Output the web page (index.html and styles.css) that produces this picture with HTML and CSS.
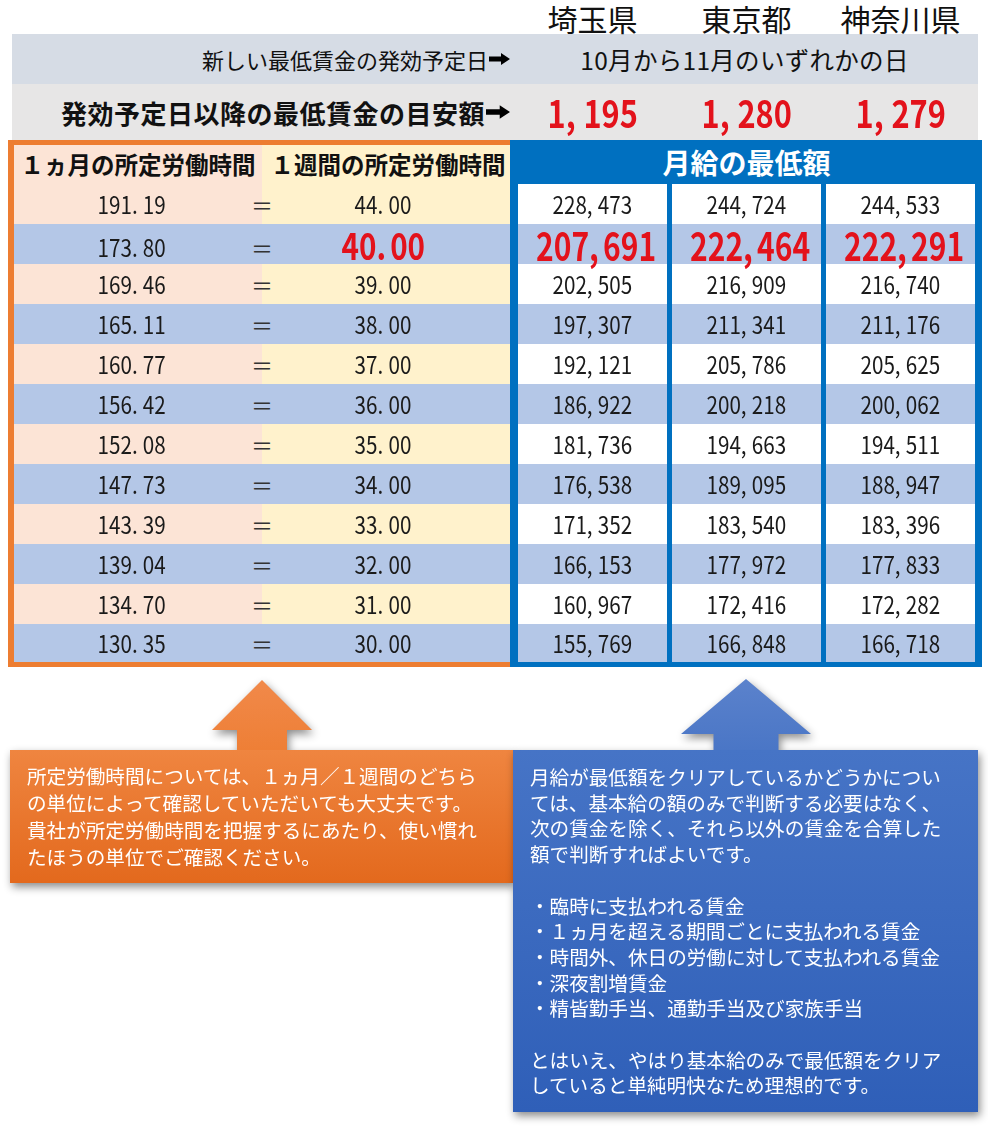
FILE: index.html
```html
<!DOCTYPE html>
<html lang="ja">
<head>
<meta charset="utf-8">
<title>最低賃金の目安額</title>
<link rel="stylesheet" href="styles.css">
</head>
<body>
<div class="page">
  <div class="cities">
    <div>埼玉県</div><div>東京都</div><div>神奈川県</div>
  </div>

  <div class="band band1">
    <div class="label">新しい最低賃金の発効予定日<svg class="arw arw-s" viewBox="0 0 21 12"><path d="M0 3.5h12V0l9 6-9 6V8.5H0z"/></svg></div>
    <div class="date">10月から11月のいずれかの日</div>
  </div>

  <div class="band band2">
    <div class="label strong">発効予定日以降の最低賃金の目安額<svg class="arw arw-l" viewBox="0 0 21 12"><path d="M0 3.5h12V0l9 6-9 6V8.5H0z"/></svg></div>
    <div class="rate"><span class="num">1<span class="sep">,</span>195</span></div>
    <div class="rate"><span class="num">1<span class="sep">,</span>280</span></div>
    <div class="rate"><span class="num">1<span class="sep">,</span>279</span></div>
  </div>

  <div class="tables">
    <div class="hours">
      <div class="hhead"><div>１ヵ月の所定労働時間</div><div>１週間の所定労働時間</div></div>
      <div class="hrow a"><span class="c1"><span class="num">191<span class="sep">.</span>19</span></span><span class="eq">＝</span><span class="c2"><span class="num">44<span class="sep">.</span>00</span></span></div>
      <div class="hrow b"><span class="c1"><span class="num">173<span class="sep">.</span>80</span></span><span class="eq">＝</span><span class="c2"><span class="num big">40<span class="sep">.</span>00</span></span></div>
      <div class="hrow a"><span class="c1"><span class="num">169<span class="sep">.</span>46</span></span><span class="eq">＝</span><span class="c2"><span class="num">39<span class="sep">.</span>00</span></span></div>
      <div class="hrow b"><span class="c1"><span class="num">165<span class="sep">.</span>11</span></span><span class="eq">＝</span><span class="c2"><span class="num">38<span class="sep">.</span>00</span></span></div>
      <div class="hrow a"><span class="c1"><span class="num">160<span class="sep">.</span>77</span></span><span class="eq">＝</span><span class="c2"><span class="num">37<span class="sep">.</span>00</span></span></div>
      <div class="hrow b"><span class="c1"><span class="num">156<span class="sep">.</span>42</span></span><span class="eq">＝</span><span class="c2"><span class="num">36<span class="sep">.</span>00</span></span></div>
      <div class="hrow a"><span class="c1"><span class="num">152<span class="sep">.</span>08</span></span><span class="eq">＝</span><span class="c2"><span class="num">35<span class="sep">.</span>00</span></span></div>
      <div class="hrow b"><span class="c1"><span class="num">147<span class="sep">.</span>73</span></span><span class="eq">＝</span><span class="c2"><span class="num">34<span class="sep">.</span>00</span></span></div>
      <div class="hrow a"><span class="c1"><span class="num">143<span class="sep">.</span>39</span></span><span class="eq">＝</span><span class="c2"><span class="num">33<span class="sep">.</span>00</span></span></div>
      <div class="hrow b"><span class="c1"><span class="num">139<span class="sep">.</span>04</span></span><span class="eq">＝</span><span class="c2"><span class="num">32<span class="sep">.</span>00</span></span></div>
      <div class="hrow a"><span class="c1"><span class="num">134<span class="sep">.</span>70</span></span><span class="eq">＝</span><span class="c2"><span class="num">31<span class="sep">.</span>00</span></span></div>
      <div class="hrow b last"><span class="c1"><span class="num">130<span class="sep">.</span>35</span></span><span class="eq">＝</span><span class="c2"><span class="num">30<span class="sep">.</span>00</span></span></div>
    </div>

    <div class="wages">
      <div class="whead">月給の最低額</div>
      <div class="wgrid">
        <div class="w a"><span class="num">228<span class="sep">,</span>473</span></div><div class="w a"><span class="num">244<span class="sep">,</span>724</span></div><div class="w a"><span class="num">244<span class="sep">,</span>533</span></div>
        <div class="w b"><span class="num big">207<span class="sep">,</span>691</span></div><div class="w b"><span class="num big">222<span class="sep">,</span>464</span></div><div class="w b"><span class="num big">222<span class="sep">,</span>291</span></div>
        <div class="w a"><span class="num">202<span class="sep">,</span>505</span></div><div class="w a"><span class="num">216<span class="sep">,</span>909</span></div><div class="w a"><span class="num">216<span class="sep">,</span>740</span></div>
        <div class="w b"><span class="num">197<span class="sep">,</span>307</span></div><div class="w b"><span class="num">211<span class="sep">,</span>341</span></div><div class="w b"><span class="num">211<span class="sep">,</span>176</span></div>
        <div class="w a"><span class="num">192<span class="sep">,</span>121</span></div><div class="w a"><span class="num">205<span class="sep">,</span>786</span></div><div class="w a"><span class="num">205<span class="sep">,</span>625</span></div>
        <div class="w b"><span class="num">186<span class="sep">,</span>922</span></div><div class="w b"><span class="num">200<span class="sep">,</span>218</span></div><div class="w b"><span class="num">200<span class="sep">,</span>062</span></div>
        <div class="w a"><span class="num">181<span class="sep">,</span>736</span></div><div class="w a"><span class="num">194<span class="sep">,</span>663</span></div><div class="w a"><span class="num">194<span class="sep">,</span>511</span></div>
        <div class="w b"><span class="num">176<span class="sep">,</span>538</span></div><div class="w b"><span class="num">189<span class="sep">,</span>095</span></div><div class="w b"><span class="num">188<span class="sep">,</span>947</span></div>
        <div class="w a"><span class="num">171<span class="sep">,</span>352</span></div><div class="w a"><span class="num">183<span class="sep">,</span>540</span></div><div class="w a"><span class="num">183<span class="sep">,</span>396</span></div>
        <div class="w b"><span class="num">166<span class="sep">,</span>153</span></div><div class="w b"><span class="num">177<span class="sep">,</span>972</span></div><div class="w b"><span class="num">177<span class="sep">,</span>833</span></div>
        <div class="w a"><span class="num">160<span class="sep">,</span>967</span></div><div class="w a"><span class="num">172<span class="sep">,</span>416</span></div><div class="w a"><span class="num">172<span class="sep">,</span>282</span></div>
        <div class="w b last"><span class="num">155<span class="sep">,</span>769</span></div><div class="w b last"><span class="num">166<span class="sep">,</span>848</span></div><div class="w b last"><span class="num">166<span class="sep">,</span>718</span></div>
      </div>
    </div>
  </div>

  <div class="notes">
    <div class="note note-o">
      <svg class="up up-o" viewBox="0 0 100 70"><defs><linearGradient id="go" x1="0" y1="0" x2="0" y2="1"><stop offset="0" stop-color="#f1894a"/><stop offset="1" stop-color="#ee7f36"/></linearGradient></defs><path d="M50 0L100 50H75V70H25V50H0Z" fill="url(#go)"/></svg>
      <div class="box box-o">所定労働時間については、１ヵ月／１週間のどちら<br>の単位によって確認していただいても大丈夫です。<br>貴社が所定労働時間を把握するにあたり、使い慣れ<br>たほうの単位でご確認ください。</div>
    </div>
    <div class="note note-b">
      <svg class="up up-b" viewBox="0 0 130 71"><defs><linearGradient id="gb" x1="0" y1="0" x2="0" y2="1"><stop offset="0" stop-color="#5b82cc"/><stop offset="1" stop-color="#4a76c6"/></linearGradient></defs><path d="M65 0L130 55H97.5V71H32.5V55H0Z" fill="url(#gb)"/></svg>
      <div class="box box-b">
        <p>月給が最低額をクリアしているかどうかについ<br>ては、基本給の額のみで判断する必要はなく、<br>次の賃金を除く、それら以外の賃金を合算した<br>額で判断すればよいです。</p>
        <p>・臨時に支払われる賃金<br>・１ヵ月を超える期間ごとに支払われる賃金<br>・時間外、休日の労働に対して支払われる賃金<br>・深夜割増賃金<br>・精皆勤手当、通勤手当及び家族手当</p>
        <p>とはいえ、やはり基本給のみで最低額をクリア<br>していると単純明快なため理想的です。</p>
      </div>
    </div>
  </div>
</div>
</body>
</html>
```

FILE: styles.css
```css
html, body {
  margin: 0;
  padding: 0;
  background: #ffffff;
}

body {
  font-family: "Noto Sans CJK JP", "Noto Sans", sans-serif;
  color: #111111;
}

.page {
  width: 988px;
  height: 1128px;
  overflow: hidden;
}

/* numbers: narrow look */
.num {
  display: inline-block;
  transform: scaleX(0.86);
  white-space: nowrap;
}

.sep {
  margin-right: 0.25em;
}

/* city header */
.cities {
  display: grid;
  grid-template-columns: 149px 149px 149px;
  column-gap: 5px;
  margin-left: 518px;
  height: 34px;
  font-size: 30px;
  line-height: 36px;
  text-align: center;
  color: #111;
}

/* grey bands */
.band {
  margin: 0 10px 0 12px;
  display: grid;
  grid-template-columns: 506px 149px 149px 149px;
  align-items: center;
}

.band1 {
  height: 50px;
  background: #d6dce5;
}

.band2 {
  height: 56px;
  background: #e7e6e6;
  grid-template-columns: 506px 149px 5px 149px 5px 149px;
}

.band2 .rate:nth-of-type(3) { grid-column: 4; }
.band2 .rate:nth-of-type(4) { grid-column: 6; }

.label {
  padding-right: 8px;
  white-space: nowrap;
  display: flex;
  justify-content: flex-end;
  align-items: center;
}

.band1 .label {
  font-size: 22px;
}

.label.strong {
  font-size: 26px;
  font-weight: 700;
  letter-spacing: 0.5px;
}

.arw {
  fill: #000;
  margin-left: 1px;
}

.arw-s { width: 21px; height: 12px; }
.arw-l { width: 24px; height: 14px; }

.date {
  grid-column: 2 / 5;
  text-align: center;
  font-size: 24.5px;
  letter-spacing: 0.3px;
  padding-left: 6px;
  color: #111;
}

.rate {
  text-align: center;
  font-size: 38px;
  font-weight: 700;
  color: #e3121b;
  line-height: 56px;
}

.rate .num {
  transform: scaleX(0.81);
}

/* tables */
.tables {
  display: flex;
  margin-left: 8px;
  width: 974px;
}

.hours {
  width: 496px;
  border-left: 6px solid #ed7d31;
  border-top: 5px solid #ed7d31;
  border-bottom: 5px solid #ed7d31;
}

.hhead {
  height: 39px;
  display: grid;
  grid-template-columns: 248px 248px;
  background: linear-gradient(to right, #fce4d6 248px, #fff2cc 248px);
  font-size: 23.5px;
  font-weight: 700;
  line-height: 39px;
  text-align: center;
  white-space: nowrap;
}

.hhead div:last-child {
  padding-left: 4px;
}

.hrow {
  height: 40px;
  display: grid;
  grid-template-columns: 236px 24px 218px 18px;
  align-items: center;
  font-size: 24px;
  line-height: 40px;
  text-align: center;
  color: #1a1a1a;
}

.hrow.a {
  background: linear-gradient(to right, #fce4d6 248px, #fff2cc 248px);
}

.hrow.b,
.w.b {
  background: #b4c7e7;
}

.hrow.last,
.w.last {
  height: 38px;
  line-height: 38px;
}

.eq {
  font-size: 22px;
  color: #333;
}

.num.big {
  font-size: 39px;
  font-weight: 700;
  color: #e3121b;
  transform: scaleX(0.77);
}

.num.big .sep {
  margin-right: 0.14em;
}

.hrow .num.big {
  font-size: 37px;
  transform: scaleX(0.8);
}

.wages {
  width: 457px;
  background: #0070c0;
  padding: 0 7px 5px 8px;
}

.whead {
  height: 44px;
  line-height: 44px;
  text-align: center;
  color: #ffffff;
  font-size: 28px;
  font-weight: 700;
}

.wgrid {
  display: grid;
  grid-template-columns: 149px 149px 149px;
  column-gap: 5px;
}

.w {
  height: 40px;
  line-height: 40px;
  text-align: center;
  font-size: 24px;
  color: #1a1a1a;
}

.w.a {
  background: #ffffff;
}

/* notes */
.notes {
  display: flex;
  align-items: flex-start;
  margin-left: 10px;
}

.note {
  display: flex;
  flex-direction: column;
  align-items: center;
  filter: drop-shadow(2px 4px 4px rgba(0, 0, 0, 0.45));
}

.note-o {
  width: 503px;
  margin-top: 13px;
}

.note-b {
  width: 465px;
  margin-top: 12px;
}

.up {
  display: block;
}

.up-o {
  width: 100px;
  height: 70px;
}

.up-b {
  width: 130px;
  height: 71px;
}

.box {
  align-self: stretch;
  color: #ffffff;
  font-size: 19.6px;
  white-space: nowrap;
}

.box-o {
  background: linear-gradient(#ef8540, #e3691d);
  line-height: 27px;
  padding: 12px 0 13px 17px;
}

.box-b {
  background: linear-gradient(#4674c6, #2f5fb8);
  line-height: 25.7px;
  padding: 14px 0 14px 17px;
}

.box-b p {
  margin: 0 0 25.7px 0;
}

.box-b p:last-child {
  margin-bottom: 0;
}
```
